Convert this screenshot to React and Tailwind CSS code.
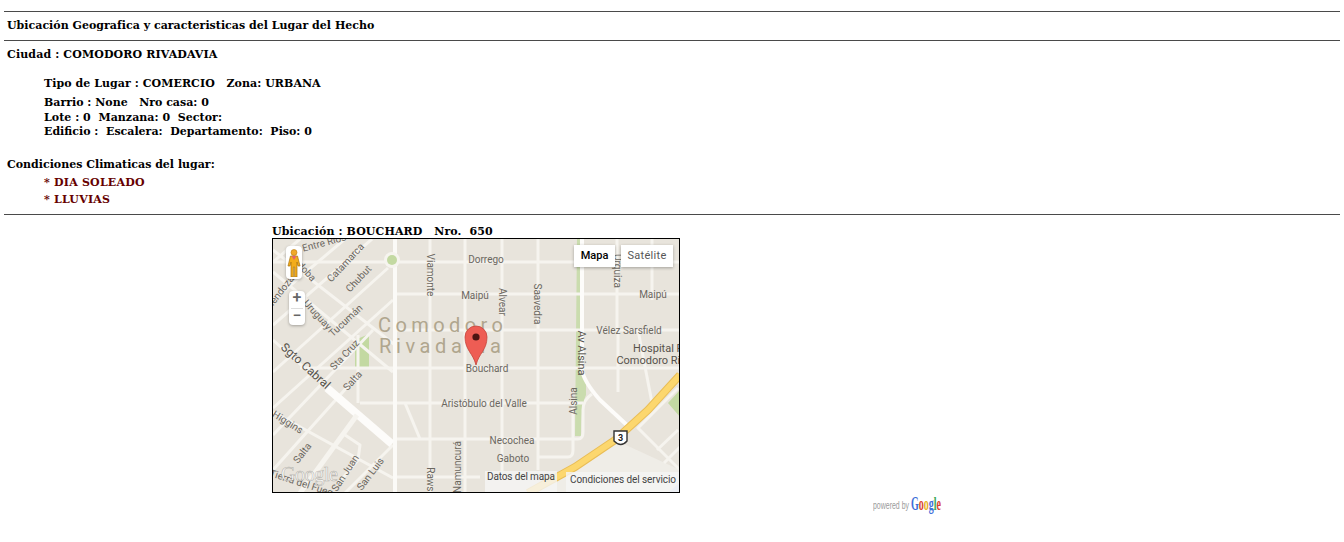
const F = { fontFamily: "Roboto, 'Liberation Sans', Arial, sans-serif", fontWeight: 400 };

function Road({ d, w = 3, c = "#f6f4ef" }) {
  return <path d={d} fill="none" stroke={c} strokeWidth={w} strokeLinejoin="round" />;
}

function Label({ x, y, s = 10, r = 0, c = "#6b675f", t }) {
  return (
    <text x={x} y={y} fontSize={s} fill={c} textAnchor="middle"
      transform={r ? `rotate(${r} ${x} ${y})` : undefined}
      style={F}>{t}</text>
  );
}

const minor = [
  "M 273 262 H 395", "M 395 262 H 680", "M 395 294 H 680", "M 395 330 H 680", "M 300 368 H 680",
  "M 360 403 H 583", "M 393 439 H 578 Q 583 439 583 432 V 410 Q 583 400 592 394", "M 538 457 H 568 Q 573 457 573 450 V 403", "M 393 477 H 480",
  "M 430 239 V 493", "M 465 239 V 493", "M 502 239 V 480", "M 538 239 V 470", "M 617 239 V 330",
  "M 652 239 V 300", "M 618 330 V 392", "M 638 330 L 652 403",
  "M 358 335 V 403", "M 405 403 L 420 439",
  "M 273 250 L 395 345", "M 273 272 L 393 372",
  "M 300 239 L 273 262", "M 345 239 L 273 300", "M 372 239 L 273 325", "M 388 268 L 273 372",
  "M 393 300 L 273 408", "M 373 330 L 273 435", "M 358 375 L 273 470",
  "M 273 412 L 393 478", "M 345 435 L 360 445 L 358 460 L 337 485", "M 393 445 L 345 493",
  "M 678 388 L 638 428 L 680 470", "M 678 430 L 657 450", "M 680 447 L 664 463",
];

function MapArt() {
  return (
    <svg viewBox="273 239 406 253" className="block w-full h-full">
      <rect x="273" y="239" width="406" height="253" fill="#e8e4dc" />
      <path d="M 528 493 L 615 440 L 680 470 V 493 Z" fill="#efede7" />
      <path d="M 668 493 L 680 482 V 493 Z" fill="#c6d8ee" />
      <path d="M 355 340 L 369 334 V 368 H 355 Z" fill="#c3d9a2" />
      <path d="M 577 239 H 581 V 362 L 586 378 L 586 395 Q 581 405 581 436 H 575 Z" fill="#cadcae" />
      <path d="M 668 403 L 680 390 V 417 Z" fill="#c3d9a2" />
      {minor.map((d) => <Road key={d} d={d} />)}
      <Road d="M 395 239 V 493" w={4} c="#fbfaf7" />
      <Road d="M 273 340 L 327 388" w={3} />
      <Road d="M 327 388 L 392 444" w={8} c="#fdfcfa" />
      <Road d="M 357 415 L 317 470 L 300 493" w={5} />
      <circle cx="392" cy="260" r="8" fill="#f6f4ef" />
      <circle cx="392" cy="260" r="5" fill="#c3d9a2" />
      <Road d="M 582 239 V 370 Q 584 382 600 400 L 629 427" w={4} c="#fdfcfa" />
      <path d="M 528 493 L 575 467 L 615 440 L 648 410 L 680 375" fill="none" stroke="#e9bd56" strokeWidth="8" />
      <path d="M 528 493 L 575 467 L 615 440 L 648 410 L 680 375" fill="none" stroke="#fcd76e" strokeWidth="6" />

      <Label x={325} y={246} r={-15} t="Entre Ríos" />
      <Label x={299} y={268} r={48} t="Córdoba" />
      <Label x={282} y={295} r={-52} t="Mendoza" />
      <Label x={348} y={265} r={-47} t="Catamarca" />
      <Label x={361} y={281} r={-47} t="Chubut" />
      <Label x={348} y={323} r={-43} t="Tucumán" />
      <Label x={315} y={317} r={48} t="Uruguay" />
      <Label x={347} y={357} r={-47} t="Sta Cruz" />
      <Label x={355} y={383} r={-48} t="Salta" />
      <Label x={303} y={369} r={42} t="Sgto Cabral" s={12} c="#56524b" />
      <Label x={286} y={425} r={32} t="Higgins" />
      <Label x={305} y={455} r={-52} t="Salta" />
      <Label x={348} y={475} r={-57} t="San Juan" />
      <Label x={373} y={476} r={-53} t="San Luis" />
      <Label x={303} y={487} r={18} t="Tierra del Fuego" />
      <Label x={427} y={275} r={90} t="Viamonte" />
      <Label x={499} y={302} r={90} t="Alvear" />
      <Label x={534} y={304} r={90} t="Saavedra" />
      <Label x={614} y={271} r={90} t="Urquiza" />
      <Label x={461} y={467} r={-90} t="Namuncurá" />
      <Label x={486} y={263} t="Dorrego" />
      <Label x={475} y={299} t="Maipú" />
      <Label x={653} y={298} t="Maipú" />
      <Label x={629} y={334} t="Vélez Sarsfield" />
      <Label x={487} y={372} t="Bouchard" />
      <Label x={484} y={407} t="Aristóbulo del Valle" />
      <Label x={512} y={444} t="Necochea" />
      <Label x={513} y={462} t="Gaboto" />
      <Label x={578} y={353} r={90} t="Av Alsina" s={11} c="#56524b" />
      <Label x={577} y={401} r={-90} t="Alsina" />
      <Label x={676} y={352} t="Hospital Regional" s={11} c="#56524b" />
      <Label x={667} y={364} t="Comodoro Rivadavia" s={11} c="#56524b" />
      <Label x={427} y={485} r={90} t="Rawson" />
      <text x="378" y="332" fontSize="20" fill="#b0a68e" letterSpacing="4.4" style={F}>Comodoro</text>
      <text x="379" y="353" fontSize="20" fill="#b0a68e" letterSpacing="4.6" style={F}>Rivadavia</text>

      <path d="M 614 431 H 627 V 441 Q 621 448 614 441 Z" fill="#fff" stroke="#333" strokeWidth="1.4" />
      <text x="620.5" y="441" fontSize="9" textAnchor="middle" fill="#222" style={{ ...F, fontWeight: 700 }}>3</text>

      <text x="281" y="481" fontSize="20" fill="#fff" fillOpacity="0.85" stroke="#8f8c84" strokeOpacity="0.6" strokeWidth="0.6" textLength="57" style={{ fontFamily: "'Liberation Serif', serif", fontWeight: 400 }}>Google</text>

      <rect x="485" y="471" width="72" height="21" fill="#f5f5f5" fillOpacity="0.8" />
      <rect x="566" y="472" width="113" height="20" fill="#f5f5f5" fillOpacity="0.8" />
      <text x="487" y="480" fontSize="10" fill="#444" textLength="68" style={F}>Datos del mapa</text>
      <text x="570" y="483" fontSize="10" fill="#444" textLength="106" style={F}>Condiciones del servicio</text>

      <path d="M 476 365 C 473 353 465 350 465 337 A 11 11 0 0 1 487 337 C 487 350 479 353 476 365 Z" fill="#ee5d54" stroke="#c4453c" strokeWidth="0.8" />
      <circle cx="476" cy="337" r="3.6" fill="#4e1512" />
    </svg>
  );
}

function Pegman() {
  return (
    <svg width="14" height="28" viewBox="0 0 14 28">
      <circle cx="7" cy="3.5" r="3" fill="#f1a92a" stroke="#b97a10" strokeWidth="0.6" />
      <path d="M 3.5 7 H 10.5 L 13 17 H 11 L 10 13 V 28 H 7.6 V 18 H 6.4 V 28 H 4 V 13 L 3 17 H 1 Z" fill="#f3ad1c" stroke="#a9720f" strokeWidth="0.7" />
      <path d="M 4.5 7 L 7 11 L 9.5 7 Z" fill="#e5636d" />
    </svg>
  );
}

function Line({ className = "", children }) {
  return <div className={"whitespace-pre " + className}>{children}</div>;
}

export default function App() {
  return (
    <div className="min-h-[542px] bg-white px-1 pt-[11px] text-[11px] font-bold leading-[14px] text-black" style={{ fontFamily: "'DejaVu Serif', serif" }}>
      <hr className="border-0 border-t border-[#4a4a4a]" />
      <Line className="pl-[3px] pt-[7px] pb-[7px] tracking-[0.02px]">Ubicación Geografica y caracteristicas del Lugar del Hecho</Line>
      <hr className="border-0 border-t border-[#4a4a4a]" />
      <Line className="pl-[3px] pt-[7px] tracking-[0.13px]">Ciudad : COMODORO RIVADAVIA</Line>
      <div className="pl-10 pt-[15px]">
        <Line className="tracking-[0.06px]">Tipo de Lugar : COMERCIO   Zona: URBANA</Line>
        <Line className="mt-[5px]">Barrio : None   Nro casa: 0</Line>
        <Line className="mt-px tracking-[0.03px]">Lote : 0  Manzana: 0  Sector: </Line>
        <Line>Edificio :  Escalera:  Departamento:  Piso: 0</Line>
      </div>
      <Line className="pl-[3px] pt-[19px]">Condiciones Climaticas del lugar:</Line>
      <div className="pl-10 pt-[4px] text-[#660000] tracking-[0.22px]">
        <Line>* DIA SOLEADO</Line>
        <Line className="mt-[3px]">* LLUVIAS</Line>
      </div>
      <hr className="mt-[7px] border-0 border-t border-[#4a4a4a]" />
      <div className="ml-[268px] mt-[10px] w-[408px]">
        <Line className="leading-[13px] tracking-[0.11px]">Ubicación : BOUCHARD   Nro.  650</Line>
        <div className="relative h-[255px] w-[408px] overflow-hidden border border-black" style={F}>
          <MapArt />
          <div className="absolute left-[13px] top-[7px] flex h-[33px] w-[16px] items-center justify-center rounded-sm bg-white shadow-[0_1px_3px_rgba(0,0,0,0.3)]">
            <Pegman />
          </div>
          <div className="absolute left-[16px] top-[52px] flex h-[34px] w-[16px] flex-col items-center rounded-sm bg-white text-[#666] shadow-[0_1px_3px_rgba(0,0,0,0.3)]">
            <span className="flex h-[17px] items-center pb-[3px] text-[16px] font-medium leading-none">+</span>
            <span className="h-px w-3 bg-[#ddd]" />
            <span className="flex h-[16px] items-center pb-[3px] text-[16px] font-medium leading-none">−</span>
          </div>
          <div className="absolute left-[301px] top-[6px] flex h-[22px] w-[41px] items-center justify-center bg-white text-[11px] font-medium text-black shadow-[0_1px_3px_rgba(0,0,0,0.3)]">Mapa</div>
          <div className="absolute left-[348px] top-[6px] flex h-[22px] w-[52px] items-center justify-center bg-white text-[11px] font-normal tracking-[0.3px] text-[#565656] shadow-[0_1px_3px_rgba(0,0,0,0.3)]">Satélite</div>
        </div>
      </div>
      <div className="ml-[869px] mt-[3px] flex h-[20px] w-[70px] items-center font-normal">
        <svg width="70" height="20" viewBox="0 0 70 20">
          <text x="0" y="13" fontSize="10" fill="#9a9a9a" textLength="36" lengthAdjust="spacingAndGlyphs" style={{ fontFamily: "'Liberation Sans', sans-serif" }}>powered by</text>
          <text x="38" y="14" fontSize="19" fontWeight="700" textLength="30" lengthAdjust="spacingAndGlyphs" style={{ fontFamily: "'Liberation Serif', serif" }}>
            <tspan fill="#3f6fd8">G</tspan><tspan fill="#d9432f">o</tspan><tspan fill="#e8b021">o</tspan><tspan fill="#3f6fd8">g</tspan><tspan fill="#3aa655">l</tspan><tspan fill="#d9432f">e</tspan>
          </text>
        </svg>
      </div>
    </div>
  );
}
